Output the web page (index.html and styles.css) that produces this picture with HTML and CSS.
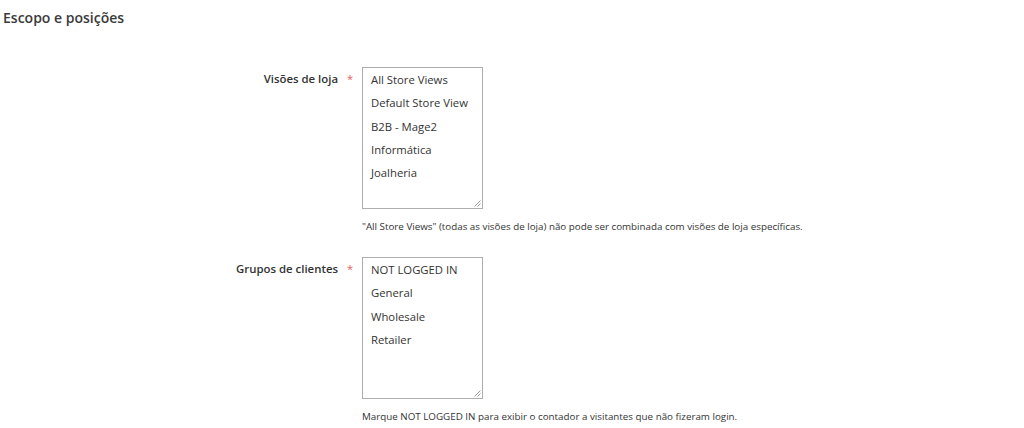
FILE: index.html
```html
<!DOCTYPE html>
<html lang="pt">
<head>
<meta charset="utf-8">
<title>Escopo e posições</title>
<link rel="stylesheet" href="styles.css">
</head>
<body>
<div class="page">
  <h2 class="section-title">Escopo e posições</h2>
  <div class="fieldset">
    <div class="field">
      <label class="field-label">Visões de loja</label>
      <span class="required">*</span>
      <div class="control">
        <div class="multiselect">
          <div class="opt">All Store Views</div>
          <div class="opt">Default Store View</div>
          <div class="opt">B2B - Mage2</div>
          <div class="opt">Informática</div>
          <div class="opt">Joalheria</div>
          <svg class="grip" width="8" height="8" viewBox="0 0 8 8"><path d="M7.5 1.5 L1.5 7.5 M7.5 4.5 L4.5 7.5" stroke="#9a9a9a" stroke-width="1" fill="none"/></svg>
        </div>
        <div class="note">"All Store Views" (todas as visões de loja) não pode ser combinada com visões de loja específicas.</div>
      </div>
    </div>
    <div class="field field-second">
      <label class="field-label">Grupos de clientes</label>
      <span class="required">*</span>
      <div class="control">
        <div class="multiselect">
          <div class="opt">NOT LOGGED IN</div>
          <div class="opt">General</div>
          <div class="opt">Wholesale</div>
          <div class="opt">Retailer</div>
          <svg class="grip" width="8" height="8" viewBox="0 0 8 8"><path d="M7.5 1.5 L1.5 7.5 M7.5 4.5 L4.5 7.5" stroke="#9a9a9a" stroke-width="1" fill="none"/></svg>
        </div>
        <div class="note">Marque NOT LOGGED IN para exibir o contador a visitantes que não fizeram login.</div>
      </div>
    </div>
  </div>
</div>
</body>
</html>
```

FILE: styles.css
```css
html, body {
  margin: 0;
  padding: 0;
  background: #ffffff;
}

body {
  font-family: "Open Sans", "Liberation Sans", sans-serif;
  color: #303030;
}

.page {
  padding: 8px 0 0 2px;
}

.section-title {
  margin: 0 0 0 1px;
  font-size: 14px;
  font-weight: 600;
  line-height: 19px;
  color: #3a3a3a;
}

.fieldset {
  margin-top: 40px;
}

.field {
  display: grid;
  grid-template-columns: 336px 24px auto;
  align-items: start;
}

.field-second {
  margin-top: 23px;
}

.field-label {
  font-size: 11.4px;
  font-weight: 600;
  line-height: 24px;
  text-align: right;
  color: #333333;
}

.required {
  font-size: 11px;
  line-height: 24px;
  color: #e22626;
  text-align: center;
  opacity: 0.75;
}

.multiselect {
  position: relative;
  box-sizing: border-box;
  width: 121px;
  height: 142px;
  border: 1px solid #adadad;
  padding: 0 0 0 8px;
  background: #fff;
}

.opt {
  font-size: 11.3px;
  line-height: 23.3px;
  color: #333333;
  white-space: nowrap;
}

.grip {
  position: absolute;
  right: 1px;
  bottom: 1px;
}

.note {
  margin-top: 11px;
  font-size: 9.8px;
  line-height: 14px;
  color: #333333;
  white-space: nowrap;
}
```
